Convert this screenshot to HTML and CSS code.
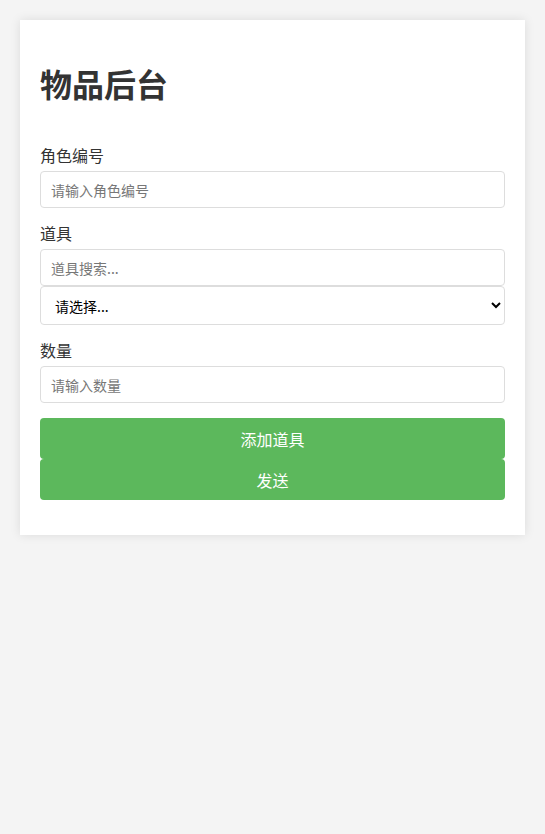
FILE: index.html
```html
<!DOCTYPE html>
<html lang="zh-CN">
<head>
<meta charset="UTF-8">
<title>物品后台</title>
<link rel="stylesheet" href="styles.css">
</head>
<body>
<div class="card">
  <h1 class="title">物品后台</h1>
  <div class="group">
    <label class="label">角色编号</label>
    <input class="field" type="text" placeholder="请输入角色编号">
  </div>
  <div class="group">
    <label class="label">道具</label>
    <input class="field" type="text" placeholder="道具搜索...">
    <select class="select">
      <option>请选择...</option>
    </select>
  </div>
  <div class="group">
    <label class="label">数量</label>
    <input class="field" type="text" placeholder="请输入数量">
  </div>
  <button class="btn">添加道具</button>
  <button class="btn btn-last">发送</button>
</div>
</body>
</html>
```
FILE: styles.css
```css
html, body {
  margin: 0;
  padding: 0;
}
body {
  background: #f4f4f4;
  font-family: "Microsoft YaHei", "Noto Sans CJK SC", "Noto Sans", sans-serif;
  color: #333;
  padding: 20px;
}
.card {
  background: #fff;
  padding: 20px;
  box-shadow: 0 0 10px rgba(0, 0, 0, 0.1);
}
.title {
  font-size: 32px;
  font-weight: bold;
  line-height: 42px;
  margin: 22px 0 41px;
  color: #333;
}
.group {
  margin-bottom: 15px;
}
.label {
  display: block;
  font-size: 16px;
  line-height: 21px;
  margin-bottom: 5px;
  color: #333;
}
.field {
  display: block;
  box-sizing: border-box;
  width: 100%;
  height: 37px;
  padding: 0 10px;
  border: 1px solid #ddd;
  border-radius: 4px;
  font-family: inherit;
  font-size: 14px;
  color: #333;
  background: #fff;
  outline: none;
}
.field::placeholder {
  color: #777;
}
.select {
  display: block;
  box-sizing: border-box;
  width: 100%;
  height: 39px;
  padding: 0 10px;
  border: 1px solid #ddd;
  border-radius: 4px;
  font-family: inherit;
  font-size: 14px;
  color: #000;
  background: #fff;
}
.btn {
  display: block;
  width: 100%;
  height: 41px;
  border: none;
  border-radius: 4px;
  background: #5cb85c;
  color: #fff;
  font-family: inherit;
  font-size: 16px;
  padding: 0;
  margin: 0;
  cursor: pointer;
}
.btn-last {
  margin-bottom: 15px;
}
```
